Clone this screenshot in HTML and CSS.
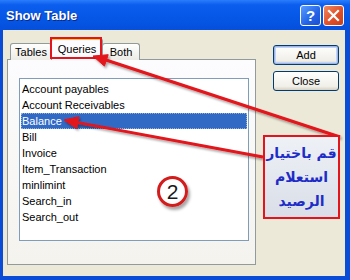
FILE: index.html
```html
<!DOCTYPE html>
<html lang="en">
  <head>
    <meta charset="UTF-8" />
    <title>Show Table</title>
    <link rel="stylesheet" href="styles.css">
  </head>
  <body>
    <div class="window">
      <div class="titlebar">
        <span class="title">Show Table</span>
        <div class="caption-btns">
          <span class="cap help">?</span>
          <span class="cap close">
            <svg width="13" height="13" viewBox="0 0 13 13">
              <path d="M2 2 L11 11 M11 2 L2 11" stroke="#fff" stroke-width="2.2" stroke-linecap="square" />
            </svg>
          </span>
        </div>
      </div>

      <div class="client">
        <div class="tabarea">
          <div class="tabs">
            <div class="tab">Tables</div>
            <div class="tab active">Queries</div>
            <div class="tab">Both</div>
          </div>
          <div class="panel">
            <ul class="list">
              <li>Account payables</li>
              <li>Account Receivables</li>
              <li class="selected">Balance</li>
              <li>Bill</li>
              <li>Invoice</li>
              <li>Item_Transaction</li>
              <li>minlimint</li>
              <li>Search_in</li>
              <li>Search_out</li>
            </ul>
          </div>
        </div>
        <div class="actions">
          <button class="btn default">Add</button>
          <button class="btn">Close</button>
        </div>
      </div>

      <!-- annotations drawn over the dialog -->
      <div class="mark"></div>
      <svg class="arrows" width="350" height="280" viewBox="0 0 350 280">
        <defs>
          <filter id="shadow" x="-10%" y="-10%" width="120%" height="130%">
            <feDropShadow dx="1.5" dy="2" stdDeviation="1" flood-color="#000" flood-opacity="0.35" />
          </filter>
        </defs>
        <g filter="url(#shadow)" fill="#e3141b" stroke="#e3141b">
          <line x1="340" y1="137" x2="106" y2="60" stroke-width="3" />
          <polygon points="93,56 108.2,54.7 104.4,66.1" stroke-width="1" />
          <line x1="263" y1="157" x2="78" y2="122.6" stroke-width="3" />
          <polygon points="64,120 78.9,116.7 76.7,128.5" stroke-width="1" />
        </g>
      </svg>
      <div class="callout" dir="rtl">
        <span>قم باختيار</span>
        <span>استعلام</span>
        <span>الرصيد</span>
      </div>
      <div class="badge">2</div>
    </div>
  </body>
</html>
```

FILE: styles.css
```css
body {
  margin: 0;
  font-family: "Liberation Sans", Arial, sans-serif;
  font-size: 11px;
}

.window {
  position: relative;
  width: 350px;
  height: 280px;
  box-sizing: border-box;
  display: flex;
  flex-direction: column;
  background: #0a4cd6;
  padding: 0 5px 4px 3px;
  overflow: hidden;
}

.titlebar {
  height: 30px;
  margin: 0 -5px 0 -3px;
  display: flex;
  align-items: center;
  justify-content: space-between;
  padding: 0 6px 0 6px;
  background: linear-gradient(to bottom, #2a7dfb 0, #0a5ded 5px, #0658e8 50%, #0550dc 100%);
}

.title {
  color: #fff;
  font-weight: bold;
  font-size: 13px;
  text-shadow: 1px 1px 0 #0a2a8a;
}

.caption-btns {
  display: flex;
  gap: 2px;
}

.cap {
  width: 19px;
  height: 19px;
  border: 1px solid #fff;
  border-radius: 3px;
  display: flex;
  align-items: center;
  justify-content: center;
  color: #fff;
  font-weight: bold;
  font-size: 15px;
}

.help {
  background: linear-gradient(135deg, #5a9cff, #2363e6 60%, #1a50d0);
}

.close {
  background: linear-gradient(135deg, #f08a5e, #e0502a 55%, #c8401c);
}

.client {
  flex: 1;
  display: flex;
  background: #ece9d8;
  padding: 8px 0 0 4px;
}

.tabarea {
  width: 249px;
  display: flex;
  flex-direction: column;
}

.tabs {
  display: flex;
  align-items: flex-end;
  height: 22px;
  margin: 0 0 -1px 3px;
  position: relative;
  z-index: 1;
}

.tab {
  height: 17px;
  box-sizing: border-box;
  border: 1px solid #919b9c;
  border-bottom: none;
  border-radius: 3px 3px 0 0;
  background: linear-gradient(to bottom, #fff, #ecebe5);
  display: flex;
  align-items: center;
  justify-content: center;
  color: #000;
}

.tab:first-child {
  width: 42px;
}

.tab.active {
  height: 22px;
  width: 52px;
  background: #fcfcfe;
  border-top: 2px solid #ffc83c;
  margin: 0 -1px;
  padding-bottom: 2px;
}

.tab:last-child {
  width: 38px;
}

.panel {
  height: 206px;
  box-sizing: border-box;
  border: 1px solid #919b9c;
  background: linear-gradient(to bottom, #fcfcfe, #f4f3ee);
  padding: 18px 6px 0 11px;
}

.list {
  list-style: none;
  margin: 0;
  padding: 2px 1px;
  width: 230px;
  height: 163px;
  box-sizing: border-box;
  border: 1px solid #7f9db9;
  background: #fff;
}

.list li {
  height: 16px;
  line-height: 16px;
  padding-left: 1px;
  color: #000;
}

.list li.selected {
  background: #316ac5;
  color: #fff;
  outline: 1px dotted #8fb0e0;
  outline-offset: -1px;
}

.actions {
  display: flex;
  flex-direction: column;
  gap: 6px;
  padding: 7px 0 0 17px;
}

.btn {
  width: 66px;
  height: 20px;
  font-family: "Liberation Sans", Arial, sans-serif;
  font-size: 11px;
  color: #000;
  border: 1px solid #003c74;
  border-radius: 3px;
  background: linear-gradient(to bottom, #fff, #f0efe8 80%, #d6d0c5);
  padding: 0;
}

.btn.default {
  box-shadow: inset 0 0 0 1px #9ab6ec, inset 0 0 0 2px #c2d3f6;
}

.mark {
  position: absolute;
  left: 50px;
  top: 37px;
  width: 52px;
  height: 22px;
  box-sizing: border-box;
  border: 2px solid #e3141b;
  z-index: 2;
}

.arrows {
  position: absolute;
  left: 0;
  top: 0;
  z-index: 3;
}

.callout {
  position: absolute;
  left: 263px;
  top: 135px;
  width: 77px;
  height: 84px;
  box-sizing: border-box;
  border: 2px solid #e3141b;
  background: linear-gradient(to bottom, #eef1f6, #d9dee8);
  display: flex;
  flex-direction: column;
  align-items: center;
  justify-content: center;
  color: #1e2cc8;
  font-family: "DejaVu Sans", sans-serif;
  font-weight: bold;
  font-size: 14px;
  line-height: 24px;
  white-space: nowrap;
  z-index: 4;
}

.badge {
  position: absolute;
  left: 157px;
  top: 176px;
  width: 31px;
  height: 31px;
  box-sizing: border-box;
  border-radius: 50%;
  border: 3px solid #d31c1c;
  background: radial-gradient(circle at 40% 35%, #fff 55%, #f1f1f1);
  box-shadow: 2px 3px 3px rgba(0, 0, 0, 0.35);
  display: flex;
  align-items: center;
  justify-content: center;
  font-size: 21px;
  color: #1a1a1a;
  z-index: 4;
}
```
